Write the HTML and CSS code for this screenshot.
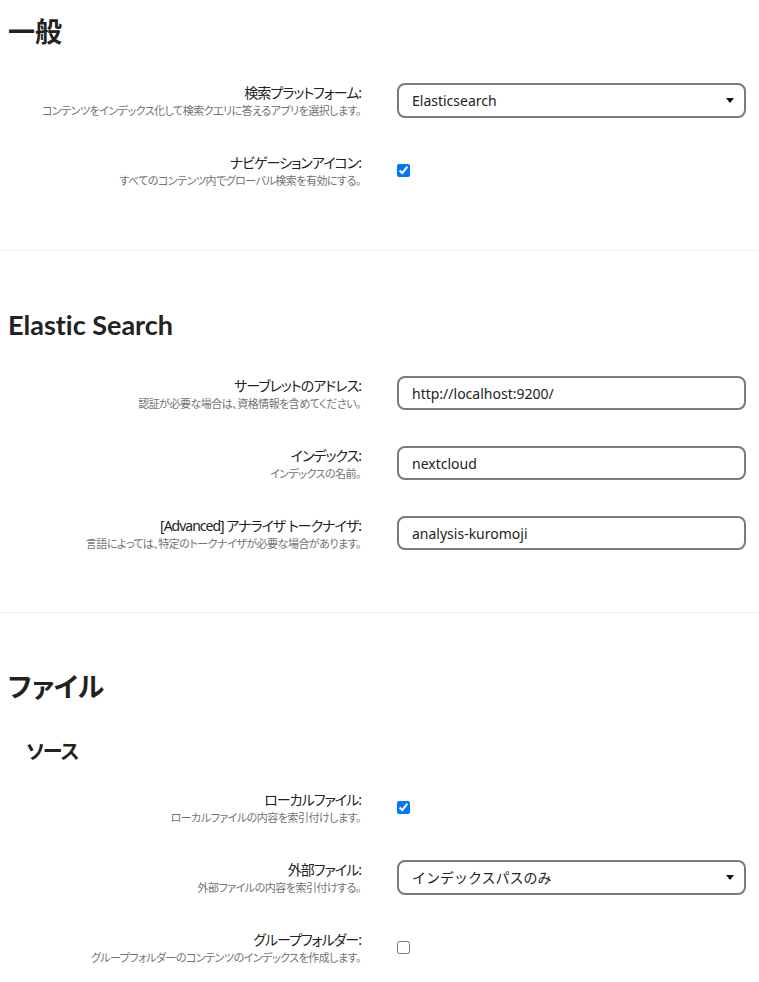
FILE: index.html
```html
<!DOCTYPE html>
<html lang="ja">

<head>
  <title>全文検索</title>
  <link rel="stylesheet" href="styles.css">
</head>

<body>
  <div class="section section-first">
    <h2>一般</h2>
    <div class="rows">
      <div class="row">
        <div class="label">
          <label>検索プラットフォーム:</label>
          <em>コンテンツをインデックス化して検索クエリに答えるアプリを選択します。</em>
        </div>
        <div class="control">
          <div class="select-wrap">
            <select>
              <option>Elasticsearch</option>
            </select>
          </div>
        </div>
      </div>
      <div class="row">
        <div class="label">
          <label>ナビゲーションアイコン:</label>
          <em>すべてのコンテンツ内でグローバル検索を有効にする。</em>
        </div>
        <div class="control">
          <input type="checkbox" checked>
        </div>
      </div>
    </div>
  </div>

  <div class="section">
    <h2>Elastic Search</h2>
    <div class="rows">
      <div class="row">
        <div class="label">
          <label>サーブレットのアドレス:</label>
          <em>認証が必要な場合は、資格情報を含めてください。</em>
        </div>
        <div class="control">
          <input type="text" value="http://localhost:9200/">
        </div>
      </div>
      <div class="row">
        <div class="label">
          <label>インデックス:</label>
          <em>インデックスの名前。</em>
        </div>
        <div class="control">
          <input type="text" value="nextcloud">
        </div>
      </div>
      <div class="row">
        <div class="label">
          <label>[Advanced] アナライザ トークナイザ:</label>
          <em>言語によっては、特定のトークナイザが必要な場合があります。</em>
        </div>
        <div class="control">
          <input type="text" value="analysis-kuromoji">
        </div>
      </div>
    </div>
  </div>

  <div class="section section-last">
    <h2>ファイル</h2>
    <h3>ソース</h3>
    <div class="rows">
      <div class="row">
        <div class="label">
          <label>ローカルファイル:</label>
          <em>ローカルファイルの内容を索引付けします。</em>
        </div>
        <div class="control">
          <input type="checkbox" checked>
        </div>
      </div>
      <div class="row">
        <div class="label">
          <label>外部ファイル:</label>
          <em>外部ファイルの内容を索引付けする。</em>
        </div>
        <div class="control">
          <div class="select-wrap">
            <select>
              <option>インデックスパスのみ</option>
            </select>
          </div>
        </div>
      </div>
      <div class="row">
        <div class="label">
          <label>グループフォルダー:</label>
          <em>グループフォルダーのコンテンツのインデックスを作成します。</em>
        </div>
        <div class="control">
          <input type="checkbox">
        </div>
      </div>
    </div>
  </div>
</body>

</html>
```

FILE: styles.css
```css
body {
  margin: 0;
  font-family: 'Noto Sans', 'Noto Sans CJK JP', sans-serif;
  font-feature-settings: "palt";
  color: #222;
  background-color: #fff;
}

.section {
  padding: 56px 8px 60px;
  border-bottom: solid 1px #ededed;
}

.section-first {
  padding-top: 14px;
  padding-bottom: 61px;
}

.section-last {
  border-bottom: none;
}

h2 {
  margin: 0 0 33px;
  font-family: 'Lato', 'Noto Sans CJK JP', sans-serif;
  font-size: 27px;
  line-height: 36px;
  font-weight: bold;
  font-variant-ligatures: none;
  font-feature-settings: "palt", "liga" 0;
}

h3 {
  margin: 32px 0 24px 18px;
  font-size: 20px;
  line-height: 28px;
  font-weight: bold;
  letter-spacing: -1px;
}

.rows {
  display: flex;
  flex-direction: column;
  gap: 34px;
}

.row {
  display: flex;
  align-items: flex-start;
  height: 36px;
}

.label {
  width: 353px;
  text-align: right;
}

.label label {
  display: block;
  font-size: 14px;
  line-height: 20px;
  letter-spacing: -1px;
}

.label em {
  display: block;
  font-style: normal;
  font-size: 11px;
  line-height: 16px;
  letter-spacing: -0.5px;
  color: #727272;
}

.control {
  margin-left: 36px;
  width: 349px;
}

.control input[type="checkbox"] {
  margin: 11px 0 0;
  width: 13px;
  height: 13px;
  display: block;
}

.select-wrap {
  position: relative;
}

.select-wrap::after {
  content: "";
  position: absolute;
  right: 12px;
  top: 15px;
  border-left: 4px solid transparent;
  border-right: 4px solid transparent;
  border-top: 5px solid #111;
  pointer-events: none;
}

select,
input[type="text"] {
  box-sizing: border-box;
  width: 100%;
  height: 34px;
  margin: 0;
  padding: 0 11px 0 13px;
  border: 2px solid #7a7a7a;
  border-radius: 8px;
  background: #fff;
  font-family: inherit;
  font-size: 14px;
  color: #222;
  appearance: none;
  -webkit-appearance: none;
}

select {
  height: 35px;
}
```
